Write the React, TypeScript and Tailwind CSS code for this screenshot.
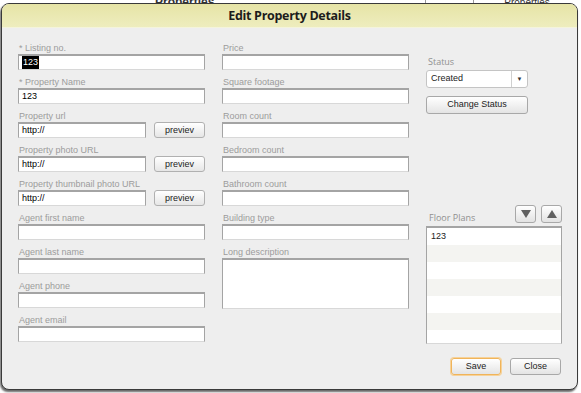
import React from "react";

const font = { fontFamily: '"Liberation Sans", Arial, sans-serif' };

function Field({ label, value, short, selected }: { label: string; value?: string; short?: boolean; selected?: boolean }) {
  return (
    <div className="flex flex-col">
      <div className="h-[12px] pl-[1px] text-[9px] leading-[12px] text-[#9c9c9c]">{label}</div>
      <div className="flex items-center gap-[8px]">
        <div
          className={`flex h-[16px] items-center border border-t-2 border-[#a4a4a4] border-b-[#d8d8d8] bg-white pl-[3px] text-[9px] text-black ${short ? "w-[128px]" : "w-[187px]"}`}
        >
          {value && (
            <span className={selected ? "bg-black px-[1px] text-white" : ""}>{value}</span>
          )}
        </div>
        {short && (
          <button className="h-[16px] w-[51px] rounded-[3px] border border-[#b0b0b0] bg-gradient-to-b from-white to-[#e6e6e6] text-[9px] leading-[14px] text-[#222]">
            previev
          </button>
        )}
      </div>
    </div>
  );
}

function Btn({ children, className }: { children: React.ReactNode; className?: string }) {
  return (
    <button
      className={`rounded-[3px] border bg-gradient-to-b from-white to-[#e4e4e4] text-[9px] text-[#222] ${className ?? ""}`}
    >
      {children}
    </button>
  );
}

export default function App() {
  const left = [
    { label: "* Listing no.", value: "123", selected: true },
    { label: "* Property Name", value: "123" },
    { label: "Property url", value: "http://", short: true },
    { label: "Property photo URL", value: "http://", short: true },
    { label: "Property thumbnail photo URL", value: "http://", short: true },
    { label: "Agent first name" },
    { label: "Agent last name" },
    { label: "Agent phone" },
    { label: "Agent email" },
  ];
  const middle = ["Price", "Square footage", "Room count", "Bedroom count", "Bathroom count", "Building type"];
  const rows = ["123", "", "", "", "", "", ""];

  return (
    <div className="relative h-[393px] w-[581px] overflow-hidden bg-white" style={font}>
      {/* page behind the dialog */}
      <div className="flex h-[3px] items-end">
        <div className="ml-[155px] -mb-[5px] text-[12px] font-bold leading-[12px] text-[#333]">Manage Properties</div>
        <div className="ml-[173px] h-[3px] w-px bg-[#999]" />
        <div className="ml-[47px] h-[3px] w-px bg-[#999]" />
        <div className="ml-[30px] -mb-[5px] text-[10px] leading-[10px] text-[#333]">Manage Properties</div>
      </div>

      {/* dialog */}
      <div className="absolute left-[1px] top-[3px] flex h-[387px] w-[577px] flex-col overflow-hidden rounded-[8px] border border-[#3a3a3a] bg-[#eeeeee] shadow-[-1px_2px_2px_rgba(0,0,0,0.6)]">
        <div className="flex h-[24px] shrink-0 items-center justify-center border-b border-[#f4f4dc] bg-gradient-to-b from-[#e6e4a6] to-[#eeedbe]">
          <span className="pt-[1px] text-[12.5px] font-bold tracking-[-0.3px] text-[#1c1c1c]" style={{ fontFamily: '"Open Sans", sans-serif' }}>
            Edit Property Details
          </span>
        </div>

        <div className="flex flex-1 pl-[16px] pr-[15px] pt-[14px]">
          <div className="flex w-[187px] flex-col gap-[6px]">
            {left.map((f) => (
              <Field key={f.label} {...f} />
            ))}
          </div>

          <div className="ml-[17px] flex w-[187px] flex-col gap-[6px]">
            {middle.map((m) => (
              <Field key={m} label={m} />
            ))}
            <div className="flex flex-col">
              <div className="h-[12px] pl-[1px] text-[9px] leading-[12px] text-[#9c9c9c]">Long description</div>
              <div className="h-[51px] w-[187px] border border-t-2 border-[#a4a4a4] border-b-[#d8d8d8] bg-white" />
            </div>
          </div>

          <div className="ml-[17px] flex w-[136px] flex-col">
            <div className="mt-[14px] h-[12px] pl-[2px] text-[9px] leading-[12px] text-[#909090]" style={{ fontFamily: '"Open Sans", sans-serif' }}>
              Status
            </div>
            <div className="mt-[2px] flex h-[18px] w-[102px] items-stretch rounded-[3px] border border-[#c4c4c4] bg-white">
              <div className="flex flex-1 items-center pl-[4px] text-[9px] text-[#222]">Created</div>
              <div className="flex w-[16px] items-center justify-center border-l border-[#d0d0d0] text-[6px] text-[#333]">▼</div>
            </div>
            <Btn className="mt-[8px] h-[18px] w-[102px] border-[#a8a8a8]">Change Status</Btn>

            <div className="mt-[92px] flex h-[19px] items-end justify-between">
              <div className="pb-[1px] pl-[3px] text-[9px] leading-[12px] text-[#909090]" style={{ fontFamily: '"Open Sans", sans-serif' }}>
                Floor Plans
              </div>
              <div className="flex gap-[5px] pb-[2px]">
                {["down", "up"].map((d) => (
                  <div key={d} className="flex h-[18px] w-[21px] items-center justify-center rounded-[3px] border border-[#a8a8a8] bg-gradient-to-b from-white to-[#e2e2e2]">
                    <svg width="10" height="8" viewBox="0 0 10 8">
                      <path d={d === "down" ? "M0 0h10L5 8z" : "M0 8h10L5 0z"} fill="#606060" />
                    </svg>
                  </div>
                ))}
              </div>
            </div>
            <div className="mt-[1px] h-[118px] w-[136px] overflow-hidden border border-t-2 border-[#a4a4a4] border-b-[#d8d8d8] bg-white">
              {rows.map((r, i) => (
                <div key={i} className={`h-[17px] pl-[4px] text-[9px] leading-[17px] text-[#222] ${i % 2 ? "bg-[#f4f4f1]" : "bg-white"}`}>
                  {r}
                </div>
              ))}
            </div>
            <div className="mt-[14px] flex justify-end gap-[9px] pr-[1px]">
              <Btn className="h-[17px] w-[50px] border-[#f0b45a] shadow-[0_0_0_1px_#f6d29a]">Save</Btn>
              <Btn className="h-[17px] w-[51px] border-[#a8a8a8]">Close</Btn>
            </div>
          </div>
        </div>
      </div>
    </div>
  );
}
